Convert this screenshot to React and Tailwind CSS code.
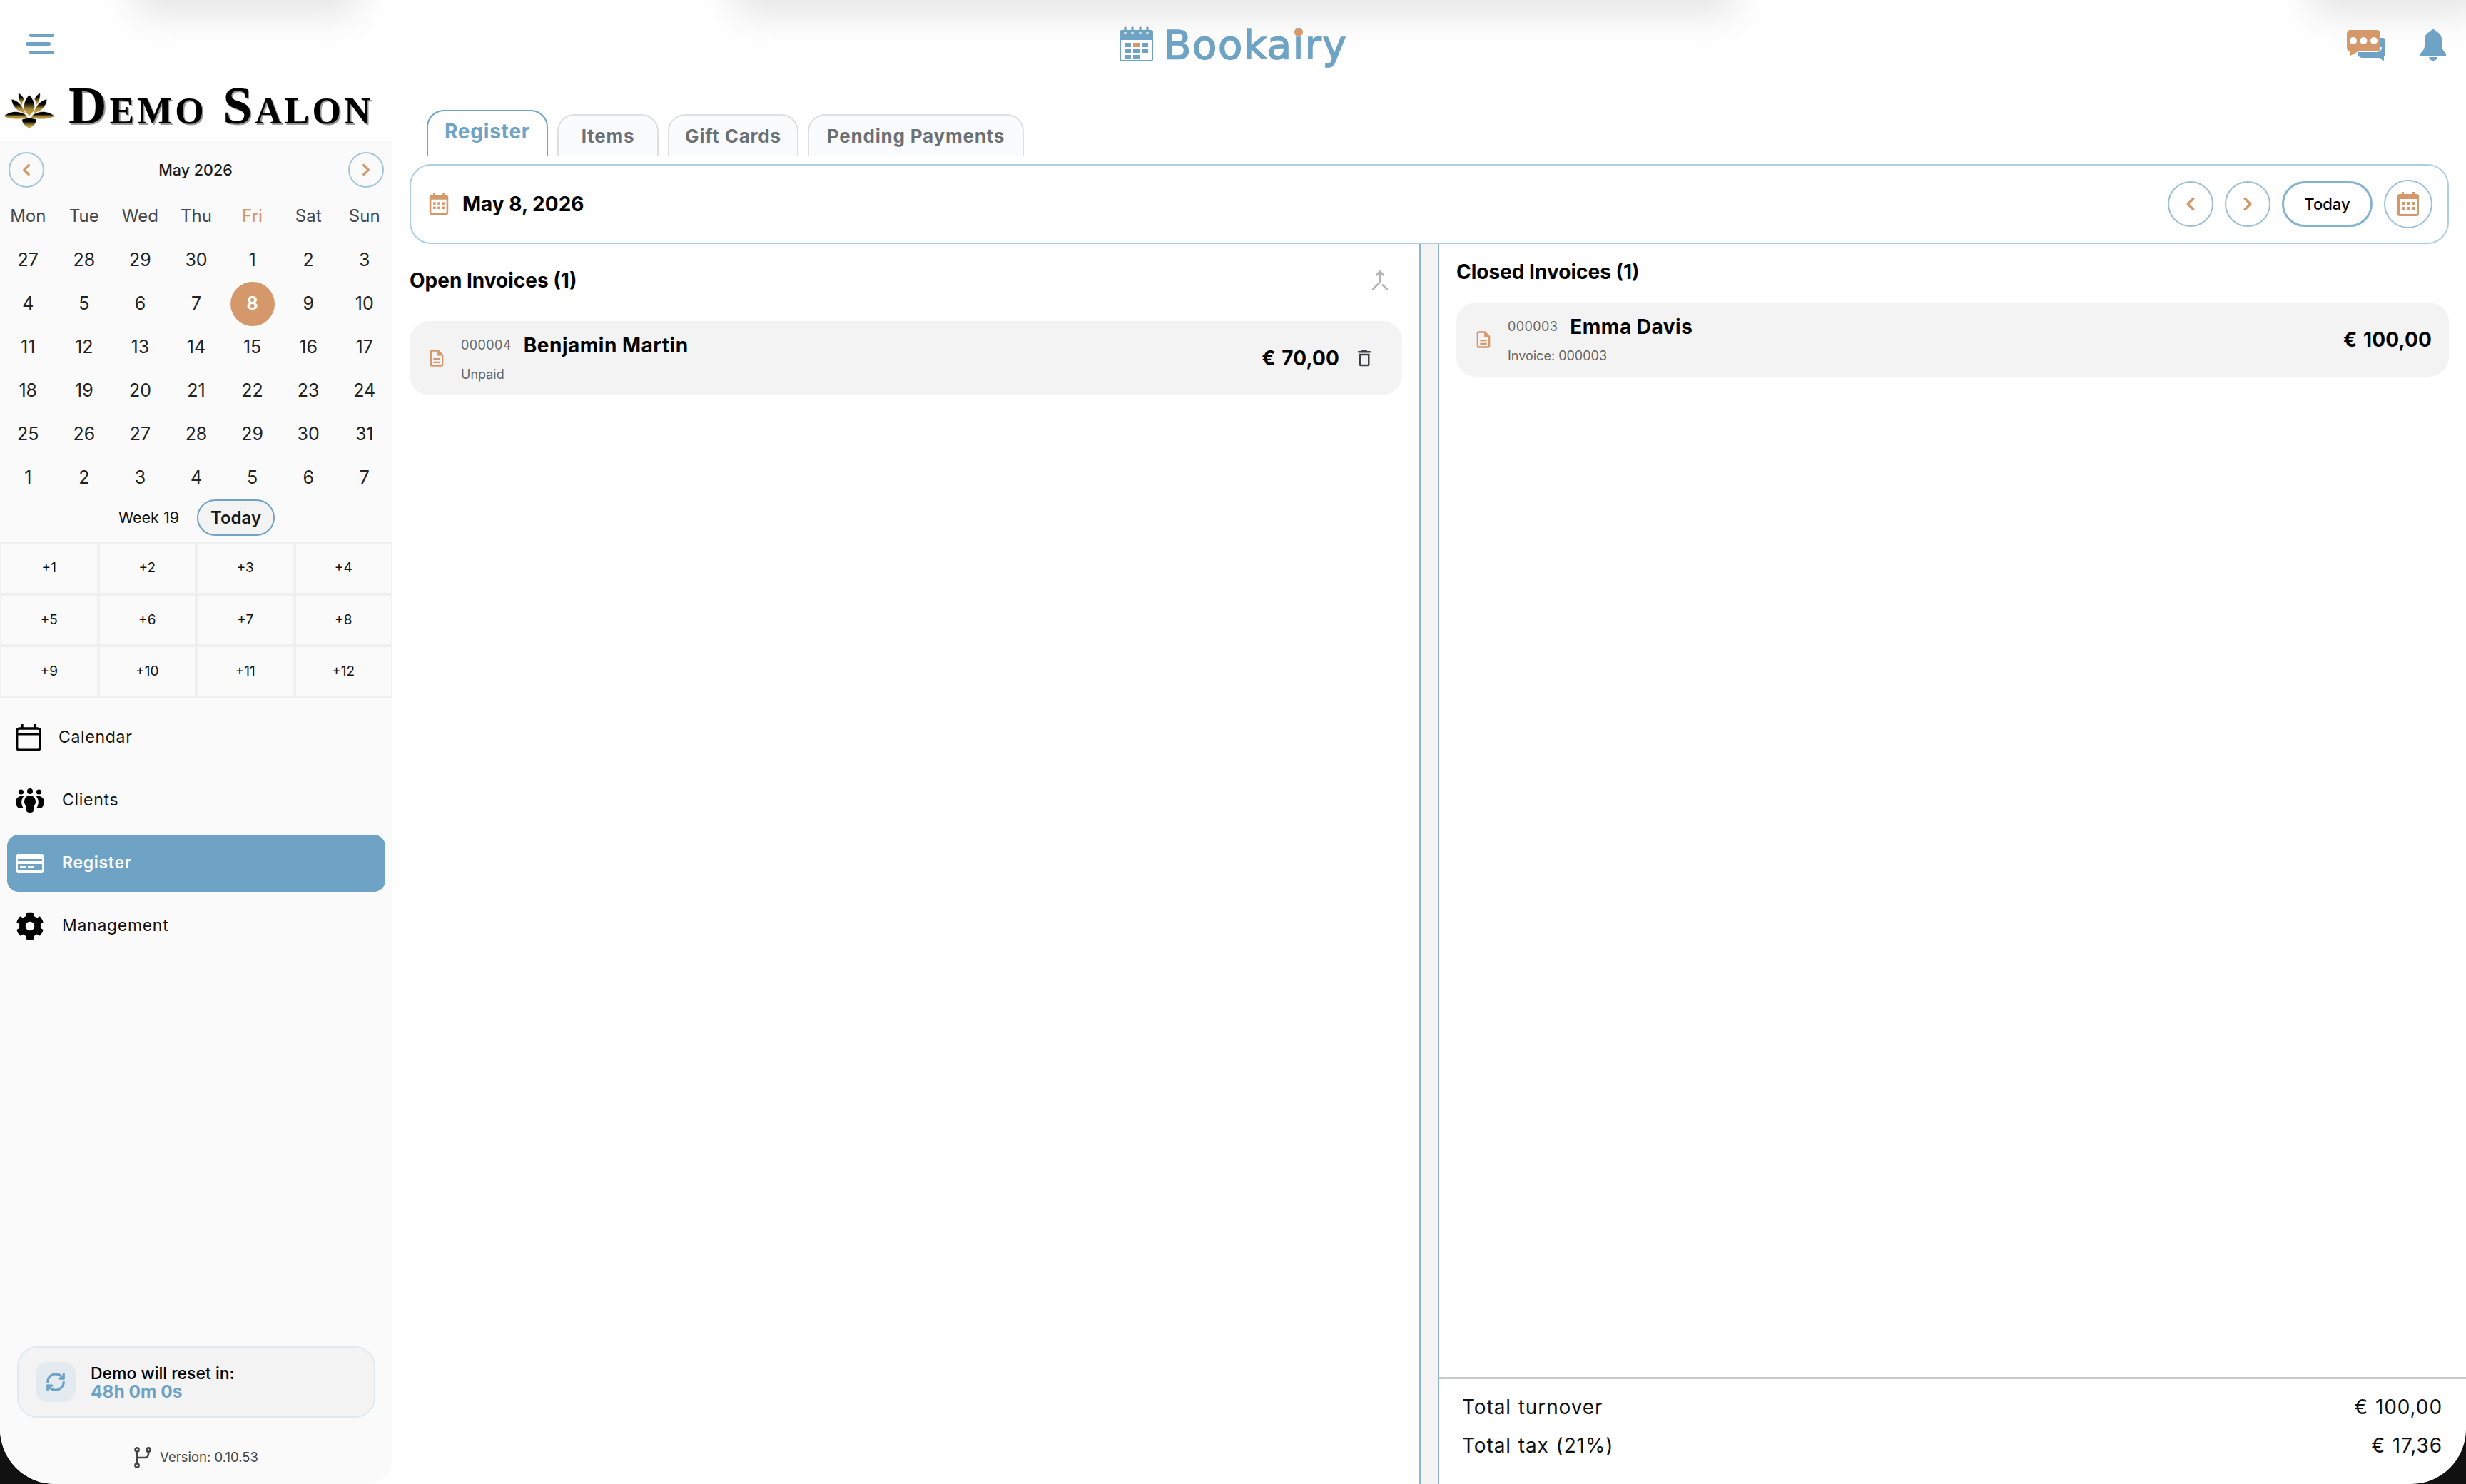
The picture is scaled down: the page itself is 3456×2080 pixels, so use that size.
import React from 'react'
import { ChevronLeft, ChevronRight, Merge, RefreshCw } from 'lucide-react'
import { FaCog } from 'react-icons/fa'
import { MdOutlineDelete, MdOutlineDescription } from 'react-icons/md'

const weekDays = ['Mon', 'Tue', 'Wed', 'Thu', 'Fri', 'Sat', 'Sun']
const dates = [
  27, 28, 29, 30, 1, 2, 3,
  4, 5, 6, 7, 8, 9, 10,
  11, 12, 13, 14, 15, 16, 17,
  18, 19, 20, 21, 22, 23, 24,
  25, 26, 27, 28, 29, 30, 31,
  1, 2, 3, 4, 5, 6, 7,
]
const todayIndex = 11
const jumps = ['+1', '+2', '+3', '+4', '+5', '+6', '+7', '+8', '+9', '+10', '+11', '+12']

const CalendarDots = ({ className }) => (
  <svg viewBox="0 0 30 34" className={className} fill="currentColor">
    <path d="M6 0h3v3h12V0h3v3h3a3 3 0 0 1 3 3v25a3 3 0 0 1-3 3H3a3 3 0 0 1-3-3V6a3 3 0 0 1 3-3h3V0Zm-3 10v21h24V10H3Z" />
    <rect x="6" y="14" width="4" height="4" />
    <rect x="13" y="14" width="4" height="4" />
    <rect x="20" y="14" width="4" height="4" />
    <rect x="6" y="21" width="4" height="4" />
    <rect x="13" y="21" width="4" height="4" />
    <rect x="20" y="21" width="4" height="4" />
  </svg>
)

const Lotus = () => (
  <svg viewBox="0 0 72 52" className="w-[72px] h-[52px] shrink-0">
    <defs>
      <linearGradient id="lotusFade" x1="0" y1="0" x2="0" y2="1">
        <stop offset="0.35" stopColor="#000" />
        <stop offset="0.68" stopColor="#a88a3c" />
        <stop offset="1" stopColor="#d2aa42" />
      </linearGradient>
    </defs>
    <g fill="url(#lotusFade)" stroke="#fff" strokeWidth="0.6">
      <path d="M0 35c8-7 18-9 30-3l4 5c-12 3-24 3-34-2Z" />
      <path d="M72 35c-8-7-18-9-30-3l-4 5c12 3 24 3 34-2Z" />
      <path d="M11 11c7 1 13 6 17 14l3 6C20 29 12 22 11 11Z" />
      <path d="M61 11c-7 1-13 6-17 14l-3 6c11-2 19-9 20-20Z" />
      <path d="M21 2c3 2 6 5 8 9-2 3-3 6-3 9-4-5-6-11-5-18Z" />
      <path d="M51 2c-3 2-6 5-8 9 2 3 3 6 3 9 4-5 6-11 5-18Z" />
      <path d="M36 5c6 6 9 14 7 22l-7 8-7-8c-2-8 1-16 7-22Z" />
      <path d="M36 52c-6-3-11-8-10-13l10-2 10 2c1 5-4 10-10 13Z" />
    </g>
  </svg>
)

const ClientsIcon = () => (
  <svg viewBox="0 0 40 34" className="w-[40px] h-[34px] shrink-0" fill="#000">
    <circle cx="7.5" cy="5" r="3.6" />
    <circle cx="20" cy="4" r="4" />
    <circle cx="32.5" cy="5" r="3.6" />
    <path d="M12 10c-5 0-12 2-12 9 0 4 2 9 7 9h4c-2-3-4-8-2-13 1-2 2-4 3-5Z" />
    <path d="M28 10c5 0 12 2 12 9 0 4-2 9-7 9h-4c2-3 4-8 2-13-1-2-2-4-3-5Z" />
    <path d="M20 10c5 0 8 4 8 9 0 3-2 5-3 6v6c0 2-2 3-5 3s-5-1-5-3v-6c-1-1-3-3-3-6 0-5 3-9 8-9Z" />
  </svg>
)

const CardIcon = () => (
  <svg viewBox="0 0 40 26" className="w-[40px] h-[26px] shrink-0" fill="#fff">
    <path d="M4 0h32a4 4 0 0 1 4 4v18a4 4 0 0 1-4 4H4a4 4 0 0 1-4-4V4a4 4 0 0 1 4-4Zm-1 7v3h34V7H3Zm0 7v8a1 1 0 0 0 1 1h32a1 1 0 0 0 1-1v-8H3Z" />
    <rect x="6" y="17" width="8" height="3" />
    <rect x="17" y="17" width="9" height="3" />
  </svg>
)

const RoundButton = ({ children, className }) => (
  <button className={`flex items-center justify-center rounded-full bg-transparent text-[#d4986a] ${className}`}>
    {children}
  </button>
)

const Sidebar = () => (
  <aside className="w-[550px] shrink-0 flex flex-col bg-[#fafafa] rounded-br-[36px] font-['Inter',sans-serif]">
    <div className="h-[88px] bg-[#fefefe] flex items-center pl-[5px] gap-[19px]">
      <Lotus />
      <span className="font-['Liberation_Serif',serif] font-bold text-[74px] leading-none tracking-[4px] text-black [font-variant:small-caps] [text-shadow:2px_2px_0_#9a9a9a] whitespace-nowrap -mt-[12px]">Demo Salon</span>
    </div>

    <div className="flex items-center justify-between px-[12px] mt-[15px]">
      <RoundButton className="w-[50px] h-[50px] border-2 border-[#a3c6da]"><ChevronLeft size={26} strokeWidth={3} /></RoundButton>
      <span className="text-[21.5px] font-medium text-[#1b1b1b] -ml-[2px]">May 2026</span>
      <RoundButton className="w-[50px] h-[50px] border-2 border-[#a3c6da]"><ChevronRight size={26} strokeWidth={3} /></RoundButton>
    </div>

    <div className="grid grid-cols-7 mt-[18px] h-[44px] items-center text-center text-[24px] leading-none text-[#44484c]">
      {weekDays.map((d) => (
        <span key={d} className={d === 'Fri' ? 'text-[#d4986a] font-medium' : ''}>{d}</span>
      ))}
    </div>

    <div className="grid grid-cols-7 mt-[9px] auto-rows-[61px] text-center text-[25px] text-[#222]">
      {dates.map((d, i) => (
        <div key={i} className="flex items-center justify-center">
          {i === todayIndex
            ? <span className="w-[62px] h-[62px] rounded-full bg-[#d4986a] text-white font-bold flex items-center justify-center">{d}</span>
            : <span>{d}</span>}
        </div>
      ))}
    </div>

    <div className="flex items-center justify-center gap-[25px] h-[51px] pl-[1px]">
      <span className="text-[21.5px] text-[#111]">Week 19</span>
      <button className="w-[109px] h-[51px] rounded-full bg-[#f3f3f3] border-2 border-[#6ea3c5] text-[24px] font-semibold text-[#1a1a1a]">Today</button>
    </div>

    <div className="grid grid-cols-4 mt-[9px] auto-rows-[72.5px]">
      {jumps.map((j) => (
        <div key={j} className="border-2 border-[#f0f0f0] flex items-center justify-center text-[19px] text-[#111]">{j}</div>
      ))}
    </div>

    <nav className="flex flex-col gap-[8px] mt-[16px] px-[10px] text-[23px] tracking-[0.7px] text-[#111]">
      <div className="h-[80px] flex items-center pl-[12px]">
        <svg viewBox="0 0 36 38" className="w-[36px] h-[38px] shrink-0" fill="none" stroke="#000">
          <rect x="1.7" y="6" width="32.6" height="30.3" rx="3.5" strokeWidth="3.4" />
          <path d="M1.7 14h32.6" strokeWidth="3" />
          <path d="M9 0v6M27 0v6" strokeWidth="3.4" />
        </svg>
        <span className="ml-[24px]">Calendar</span>
      </div>
      <div className="h-[80px] flex items-center pl-[12px]">
        <ClientsIcon />
        <span className="ml-[25px]">Clients</span>
      </div>
      <div className="h-[80px] flex items-center pl-[12px] bg-[#6ea3c5] rounded-[16px] text-white font-semibold">
        <CardIcon />
        <span className="ml-[25px]">Register</span>
      </div>
      <div className="h-[80px] flex items-center pl-[12px]">
        <FaCog className="w-[40px] h-[40px] shrink-0 text-black" />
        <span className="ml-[25px]">Management</span>
      </div>
    </nav>

    <div className="mt-auto mx-[24px] h-[100px] rounded-[28px] border-2 border-[#deeaef] bg-[#f3f3f3] flex items-center pl-[24px]">
      <div className="w-[56px] h-[56px] rounded-[16px] bg-[#e3ebf0] flex items-center justify-center text-[#6ea3c5]">
        <RefreshCw size={30} strokeWidth={2.6} />
      </div>
      <div className="ml-[21px] flex flex-col">
        <span className="text-[23px] leading-[26px] font-medium text-black">Demo will reset in:</span>
        <span className="text-[24.5px] leading-[25px] font-bold text-[#6ea3c5]">48h 0m 0s</span>
      </div>
    </div>

    <div className="flex items-center justify-center gap-[12px] h-[40px] mt-[36px] mb-[17px] text-[18.5px] text-[#444]">
      <svg viewBox="0 0 24 30" className="w-[24px] h-[30px]" fill="none" stroke="#444" strokeWidth="2.6">
        <circle cx="4" cy="4" r="2.6" />
        <circle cx="4" cy="26" r="2.6" />
        <circle cx="20" cy="4" r="2.6" />
        <path d="M4 7v16M20 7v3a5 5 0 0 1-5 5H4" />
      </svg>
      <span>Version: 0.10.53</span>
    </div>
  </aside>
)

const Tab = ({ children, active, className }) => (
  active
    ? <div className={`h-[64px] rounded-t-[24px] border-2 border-b-0 border-[#6ea3c5] bg-white flex items-center justify-center pb-[6px] text-[28px] tracking-[0.8px] font-bold text-[#6ea3c5] ${className}`}>{children}</div>
    : <div className={`h-[58px] rounded-t-[24px] border-2 border-b-0 border-[#dfdfdf] bg-[#fafbfd] flex items-center justify-center text-[26px] tracking-[0.8px] font-bold text-[#6b7075] ${className}`}>{children}</div>
)

const InvoiceRow = ({ number, name, note, amount, children }) => (
  <div className="h-[104px] rounded-[28px] bg-[#f3f3f3] flex items-center pl-[28px] pr-[24px]">
    <MdOutlineDescription className="w-[28px] h-[28px] shrink-0 text-[#d4986a] -ml-[4px]" />
    <div className="ml-[20px] flex flex-col">
      <div className="flex items-center h-[36px] -mt-[2px]">
        <span className="text-[18px] tracking-[0.4px] text-[#666]">{number}</span>
        <span className="ml-[17px] text-[28px] tracking-[0.5px] font-bold text-black">{name}</span>
      </div>
      <span className="mt-[11px] text-[18px] leading-[24px] text-[#666]">{note}</span>
    </div>
    <div className="ml-auto flex items-center">
      <span className="text-[28px] tracking-[0.1px] font-bold text-black [word-spacing:2px]">{amount}</span>
      {children}
    </div>
  </div>
)

const Main = () => (
  <main className="flex-1 min-w-0 flex flex-col font-['Inter',sans-serif]">
    <div className="flex items-end pl-[48px] pt-[44px] gap-[13px]">
      <Tab active className="w-[170px]">Register</Tab>
      <Tab className="w-[142px]">Items</Tab>
      <Tab className="w-[183px]">Gift Cards</Tab>
      <Tab className="w-[303px]">Pending Payments</Tab>
    </div>

    <div className="mx-[24px] mt-[12px] h-[112px] shrink-0 rounded-[30px] border-2 border-[#aecfdf] flex items-center pl-[26px] pr-[21px]">
      <CalendarDots className="w-[28px] h-[30px] text-[#d4986a] -ml-[1px]" />
      <span className="ml-[19px] text-[28px] font-bold text-black">May 8, 2026</span>
      <div className="ml-auto flex items-center">
        <RoundButton className="w-[64px] h-[64px] border-2 border-[#9cc0d6]"><ChevronLeft size={30} strokeWidth={2.8} /></RoundButton>
        <RoundButton className="w-[64px] h-[64px] border-2 border-[#9cc0d6] ml-[16px]"><ChevronRight size={30} strokeWidth={2.8} /></RoundButton>
        <button className="ml-[16px] w-[127px] h-[64px] rounded-full border-[3px] border-[#84b3cf] text-[22px] font-medium text-black">Today</button>
        <RoundButton className="ml-[16px] w-[68px] h-[68px] border-2 border-[#9cc0d6]"><CalendarDots className="w-[30px] h-[34px]" /></RoundButton>
      </div>
    </div>

    <div className="flex-1 min-h-0 flex">
      <section className="w-[1439px] shrink-0 px-[24px] pt-[30px]">
        <div className="flex items-center justify-between h-[42px] pr-[16px]">
          <h2 className="text-[28px] font-bold text-black">Open Invoices (1)</h2>
          <Merge size={30} className="text-[#b3b3b3]" />
        </div>
        <div className="mt-[36px]">
          <InvoiceRow number="000004" name="Benjamin Martin" note="Unpaid" amount="€ 70,00">
            <MdOutlineDelete className="ml-[20px] mr-[14px] w-[30px] h-[30px] text-[#3d4248]" />
          </InvoiceRow>
        </div>
      </section>

      <div className="w-[28px] shrink-0 bg-[#f3f3f3] border-x-2 border-[#8fb4cc]" />

      <section className="flex-1 min-w-0 flex flex-col">
        <div className="px-[24px] pt-[18px] flex-1">
          <h2 className="h-[42px] flex items-center text-[28px] font-bold text-black">Closed Invoices (1)</h2>
          <div className="mt-[22px]">
            <InvoiceRow number="000003" name="Emma Davis" note="Invoice: 000003" amount="€ 100,00" />
          </div>
        </div>
        <div className="h-[150px] shrink-0 border-t-[3px] border-[#c5cace] pt-[12px] pl-[32px] pr-[33px] text-[28px] tracking-[0.9px] [word-spacing:1px] text-[#111]">
          <div className="h-[54px] flex items-center justify-between"><span>Total turnover</span><span>€ 100,00</span></div>
          <div className="h-[54px] flex items-center justify-between"><span>Total tax (21%)</span><span>€ 17,36</span></div>
        </div>
      </section>
    </div>
  </main>
)

const Header = () => (
  <header className="relative h-[110px] shrink-0 flex items-start justify-between pl-[36px] pr-[28px]">
    {/* blurred page content scrolled under the top bar */}
    <div className="absolute left-[190px] top-[-60px] w-[310px] h-[80px] bg-[#e4e4e4] blur-[26px]" />
    <div className="absolute left-[1030px] top-[-60px] w-[1400px] h-[80px] bg-[#e4e4e4] blur-[26px]" />
    <div className="absolute left-[3240px] top-[-60px] w-[240px] h-[80px] bg-[#e4e4e4] blur-[26px]" />

    <div className="relative mt-[47px] w-[40px] flex flex-col gap-[7px]">
      <span className="block h-[5px] w-[35px] ml-[5px] rounded-full bg-[#6ea3c5]" />
      <span className="block h-[5px] w-[35px] rounded-full bg-[#6ea3c5]" />
      <span className="block h-[5px] w-[35px] ml-[5px] rounded-full bg-[#6ea3c5]" />
    </div>

    <div className="absolute left-[1569px] top-[37px] flex items-start">
      <svg viewBox="0 0 47 49" className="w-[47px] h-[49px] shrink-0">
        <path d="M3 5h41a3 3 0 0 1 3 3v38a3 3 0 0 1-3 3H3a3 3 0 0 1-3-3V8a3 3 0 0 1 3-3Zm-1 14v27a1 1 0 0 0 1 1h41a1 1 0 0 0 1-1V19H2Z" fill="#6ea3c5" />
        <path d="M8 10V2M18 10V2M29 10V2M39 10V2" stroke="#6ea3c5" strokeWidth="3.4" strokeLinecap="round" />
        <path d="M8 11V8M18 11V8M29 11V8M39 11V8" stroke="#d8e7f0" strokeWidth="3.4" />
        <g fill="#6ea3c5">
          <rect x="7" y="23" width="9" height="6" />
          <rect x="31" y="23" width="9" height="6" />
          <rect x="7" y="31" width="9" height="6" />
          <rect x="19" y="31" width="9" height="6" />
          <rect x="31" y="31" width="9" height="6" />
          <rect x="7" y="40" width="9" height="6" />
          <rect x="19" y="40" width="9" height="6" />
        </g>
        <rect x="19" y="23" width="9" height="6" fill="#d4986a" />
      </svg>
      <div className="relative ml-[15px] -mt-[5px] font-['DejaVu_Sans',sans-serif] text-[56px] leading-[62px] tracking-[1.6px] [-webkit-text-stroke:1.6px_#6ea3c5] text-[#6ea3c5]">
        Bookairy
        <span className="absolute left-[183px] top-[7px] w-[12px] h-[12px] rounded-full bg-[#d4986a]" />
      </div>
    </div>

    <div className="relative mt-[41px] flex items-start gap-[49px]">
      <svg viewBox="0 0 54 44" className="w-[54px] h-[44px] mt-[1px]">
        <path d="M15 29h26a5 5 0 0 0 6-5V11h3a4 4 0 0 1 4 4v19c0 2-1 3-2 3v7l-6-5H22c-4 0-7-2-7-10Z" fill="#6ea3c5" />
        <path d="M15 30h27a6 6 0 0 0 6-6" fill="none" stroke="#fff" strokeWidth="2" />
        <path d="M5 0h37a5 5 0 0 1 5 5v20a5 5 0 0 1-5 5H16L5 36v-6a5 5 0 0 1-5-5V5a5 5 0 0 1 5-5Z" fill="#d4986a" />
        <circle cx="9" cy="15" r="5" fill="#fff" />
        <circle cx="23.5" cy="15" r="5" fill="#fff" />
        <circle cx="38" cy="15" r="5" fill="#fff" />
      </svg>
      <svg viewBox="0 0 36 44" className="w-[36px] h-[44px]" fill="#6ea3c5">
        <path d="M18 0a3 3 0 0 1 3 3c6 1 9 6 9 12v8c0 4 2 7 6 11v4H0v-4c4-4 6-7 6-11v-8C6 9 9 4 15 3a3 3 0 0 1 3-3Z" />
        <path d="M12 39h12c-1 3-3 5-6 5s-5-2-6-5Z" />
      </svg>
    </div>
  </header>
)

const App = () => {
  return (
    <div className="h-screen w-full bg-[#111] overflow-hidden">
      <div className="h-full w-full bg-white rounded-b-[77px] overflow-hidden flex flex-col">
        <Header />
        <div className="flex-1 min-h-0 flex">
          <Sidebar />
          <Main />
        </div>
      </div>
    </div>
  )
}

export default App
